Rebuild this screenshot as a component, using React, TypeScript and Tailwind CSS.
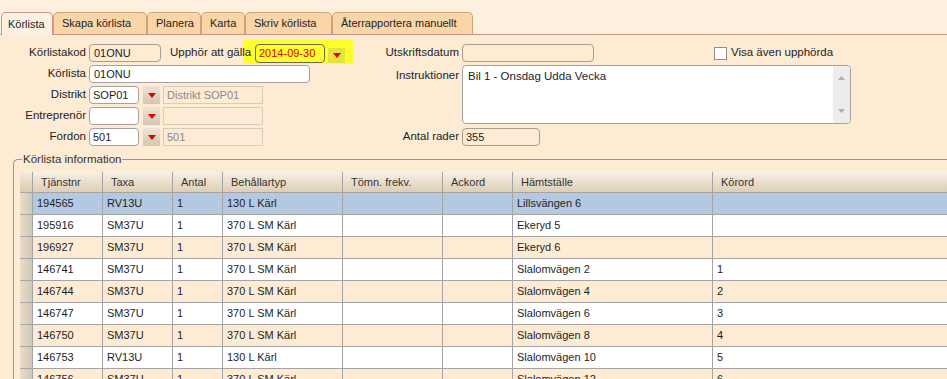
import React from 'react';

const tabs = [
  { label: 'Körlista', w: 'w-[52px]', active: true },
  { label: 'Skapa körlista', w: 'w-[94px]', active: false },
  { label: 'Planera', w: 'w-[54px]', active: false },
  { label: 'Karta', w: 'w-[44px]', active: false },
  { label: 'Skriv körlista', w: 'w-[87px]', active: false },
  { label: 'Återrapportera manuellt', w: 'w-[141px]', active: false },
];

const columns = [
  { label: 'Tjänstnr', w: 'w-[70px]' },
  { label: 'Taxa', w: 'w-[70px]' },
  { label: 'Antal', w: 'w-[50px]' },
  { label: 'Behållartyp', w: 'w-[120px]' },
  { label: 'Tömn. frekv.', w: 'w-[100px]' },
  { label: 'Ackord', w: 'w-[70px]' },
  { label: 'Hämtställe', w: 'w-[200px]' },
  { label: 'Körord', w: 'w-[260px]' },
];

const rows = [
  ['194565', 'RV13U', '1', '130 L Kärl', '', '', 'Lillsvängen 6', ''],
  ['195916', 'SM37U', '1', '370 L SM Kärl', '', '', 'Ekeryd 5', ''],
  ['196927', 'SM37U', '1', '370 L SM Kärl', '', '', 'Ekeryd 6', ''],
  ['146741', 'SM37U', '1', '370 L SM Kärl', '', '', 'Slalomvägen 2', '1'],
  ['146744', 'SM37U', '1', '370 L SM Kärl', '', '', 'Slalomvägen 4', '2'],
  ['146747', 'SM37U', '1', '370 L SM Kärl', '', '', 'Slalomvägen 6', '3'],
  ['146750', 'SM37U', '1', '370 L SM Kärl', '', '', 'Slalomvägen 8', '4'],
  ['146753', 'RV13U', '1', '130 L Kärl', '', '', 'Slalomvägen 10', '5'],
  ['146756', 'SM37U', '1', '370 L SM Kärl', '', '', 'Slalomvägen 12', '6'],
];

const Arrow = () => (
  <svg width="8" height="5" viewBox="0 0 8 5">
    <polygon points="0,0 8,0 4,5" fill="#e00000" />
  </svg>
);

const DropButton = () => (
  <div className="ml-[4px] flex h-[18px] w-[17px] items-center justify-center bg-gradient-to-b from-[#efe4d4] to-[#d3c6b2]">
    <Arrow />
  </div>
);

const Label = ({ children, w }: { children: React.ReactNode; w: string }) => (
  <div className={`${w} shrink-0 pr-[3px] text-right text-[11.5px]`}>{children}</div>
);

export default function App() {
  return (
    <div className="h-[379px] w-[947px] overflow-hidden bg-[#fdebd4] font-['Liberation_Sans',Arial,sans-serif] text-[11px] text-[#1e1e1e]">
      {/* tab strip */}
      <div className="flex h-[35px] items-end border-b border-[#d09383] bg-[#fdf0df] pl-[1px]">
        {tabs.map((t) =>
          t.active ? (
            <div
              key={t.label}
              className={`${t.w} -mb-px flex h-[23px] items-center rounded-t-[5px] border border-b-0 border-[#d0948a] bg-[#fdf1e3] pl-[6px] pt-[1px]`}
            >
              {t.label}
            </div>
          ) : (
            <div
              key={t.label}
              className={`${t.w} flex h-[22px] items-center rounded-t-[5px] border border-b-0 border-[#c6a682] bg-[#f9d5a8] pl-[8px]`}
            >
              {t.label}
            </div>
          )
        )}
      </div>

      {/* form */}
      <div className="flex pt-[9px]">
        <div className="flex w-[360px] shrink-0 flex-col gap-[3px]">
          <div className="relative flex h-[18px] items-center">
            <div className="absolute left-[243px] top-[-5px] h-[25px] w-[110px] bg-[#ffff2e]" />
            <Label w="w-[89px]">Körlistakod</Label>
            <div className="flex h-[18px] w-[72px] items-center rounded-[4px] border border-[#a99d8e] pl-[4px]">01ONU</div>
            <div className="relative ml-[9px] w-[85px] text-[11.5px]">Upphör att gälla</div>
            <div className="relative flex h-[19px] w-[70px] items-center rounded-[4px] border border-[#6e6a4e] pl-[3px] text-[#e00000]">
              2014-09-30
            </div>
            <div className="relative ml-[3px] mt-[4px] flex h-[15px] w-[17px] items-center justify-center bg-[#e4e43a]">
              <Arrow />
            </div>
          </div>
          <div className="flex h-[18px] items-center">
            <Label w="w-[89px]">Körlista</Label>
            <div className="flex h-[18px] w-[221px] items-center rounded-[4px] border border-[#a3a3a3] bg-white pl-[4px]">01ONU</div>
          </div>
          {[
            ['Distrikt', 'SOP01', 'Distrikt SOP01'],
            ['Entreprenör', '', ''],
            ['Fordon', '501', '501'],
          ].map(([l, v, d]) => (
            <div key={l} className="flex h-[18px] items-center">
              <Label w="w-[89px]">{l}</Label>
              <div className="flex h-[18px] w-[50px] items-center rounded-[4px] border border-[#a3a3a3] bg-white pl-[3px]">{v}</div>
              <DropButton />
              <div className="ml-[3px] flex h-[18px] w-[100px] items-center border border-[#d9ccbb] pl-[3px] text-[#8a8a8a]">{d}</div>
            </div>
          ))}
        </div>

        <div className="flex flex-col">
          <div className="flex h-[18px] items-center">
            <Label w="w-[102px]">Utskriftsdatum</Label>
            <div className="h-[18px] w-[132px] rounded-[4px] border border-[#a99d8e]" />
            <div className="ml-[120px] h-[13px] w-[13px] border border-[#8f8f8f] bg-white" />
            <div className="ml-[4px] text-[11.5px]">Visa även upphörda</div>
          </div>
          <div className="mt-[3px] flex">
            <Label w="w-[102px]">
              <div className="pt-[2px]">Instruktioner</div>
            </Label>
            <div className="flex h-[59px] w-[389px] overflow-hidden rounded-[4px] border border-[#a3a3a3] bg-white">
              <div className="flex-1 pl-[5px] pt-[2px] text-[11.5px]">Bil 1 - Onsdag Udda Vecka</div>
              <div className="flex w-[17px] flex-col items-center justify-between bg-[#ededed] py-[10px]">
                <svg width="7" height="4" viewBox="0 0 7 4">
                  <polygon points="0,4 7,4 3.5,0" fill="#b0b0b0" />
                </svg>
                <svg width="7" height="4" viewBox="0 0 7 4">
                  <polygon points="0,0 7,0 3.5,4" fill="#b0b0b0" />
                </svg>
              </div>
            </div>
          </div>
          <div className="mt-[4px] flex h-[18px] items-center">
            <Label w="w-[102px]">Antal rader</Label>
            <div className="flex h-[18px] w-[78px] items-center rounded-[4px] border border-[#a99d8e] pl-[3px]">355</div>
          </div>
        </div>
      </div>

      {/* group box */}
      <fieldset className="ml-[13px] mt-[7px] min-w-0 rounded-tl-[5px] border-l border-t border-[#c8866f]">
        <legend className="ml-[8px] px-[1px] text-[11.5px] leading-[13px] text-[#333]">Körlista information</legend>
        <div className="pl-[6px] pt-[6px]">
          <div className="flex h-[21px] border-b border-[#a4a4a4]">
            <div className="w-[13px] shrink-0 border-r border-[#a4a4a4] bg-gradient-to-b from-[#f4ecdf] to-[#d9cab1]" />
            {columns.map((c) => (
              <div
                key={c.label}
                className={`${c.w} flex shrink-0 items-center border-r border-[#a4a4a4] bg-gradient-to-b from-[#f7f0e4] to-[#ddceb5] pl-[8px] text-[#333]`}
              >
                {c.label}
              </div>
            ))}
          </div>
          {rows.map((r, i) => (
            <div
              key={r[0]}
              className={`flex h-[22px] border-b border-[#a4a4a4] ${
                i === 0 ? 'bg-[#b5c8e2]' : i % 2 === 1 ? 'bg-white' : 'bg-[#fdebd4]'
              }`}
            >
              <div className="w-[13px] shrink-0 border-r border-[#a4a4a4] bg-gradient-to-r from-[#e7ddcc] to-[#d2c6b1]" />
              {columns.map((c, j) => (
                <div key={c.label} className={`${c.w} flex shrink-0 items-center border-r border-[#a4a4a4] pl-[4px]`}>
                  {r[j]}
                </div>
              ))}
            </div>
          ))}
        </div>
      </fieldset>
    </div>
  );
}
